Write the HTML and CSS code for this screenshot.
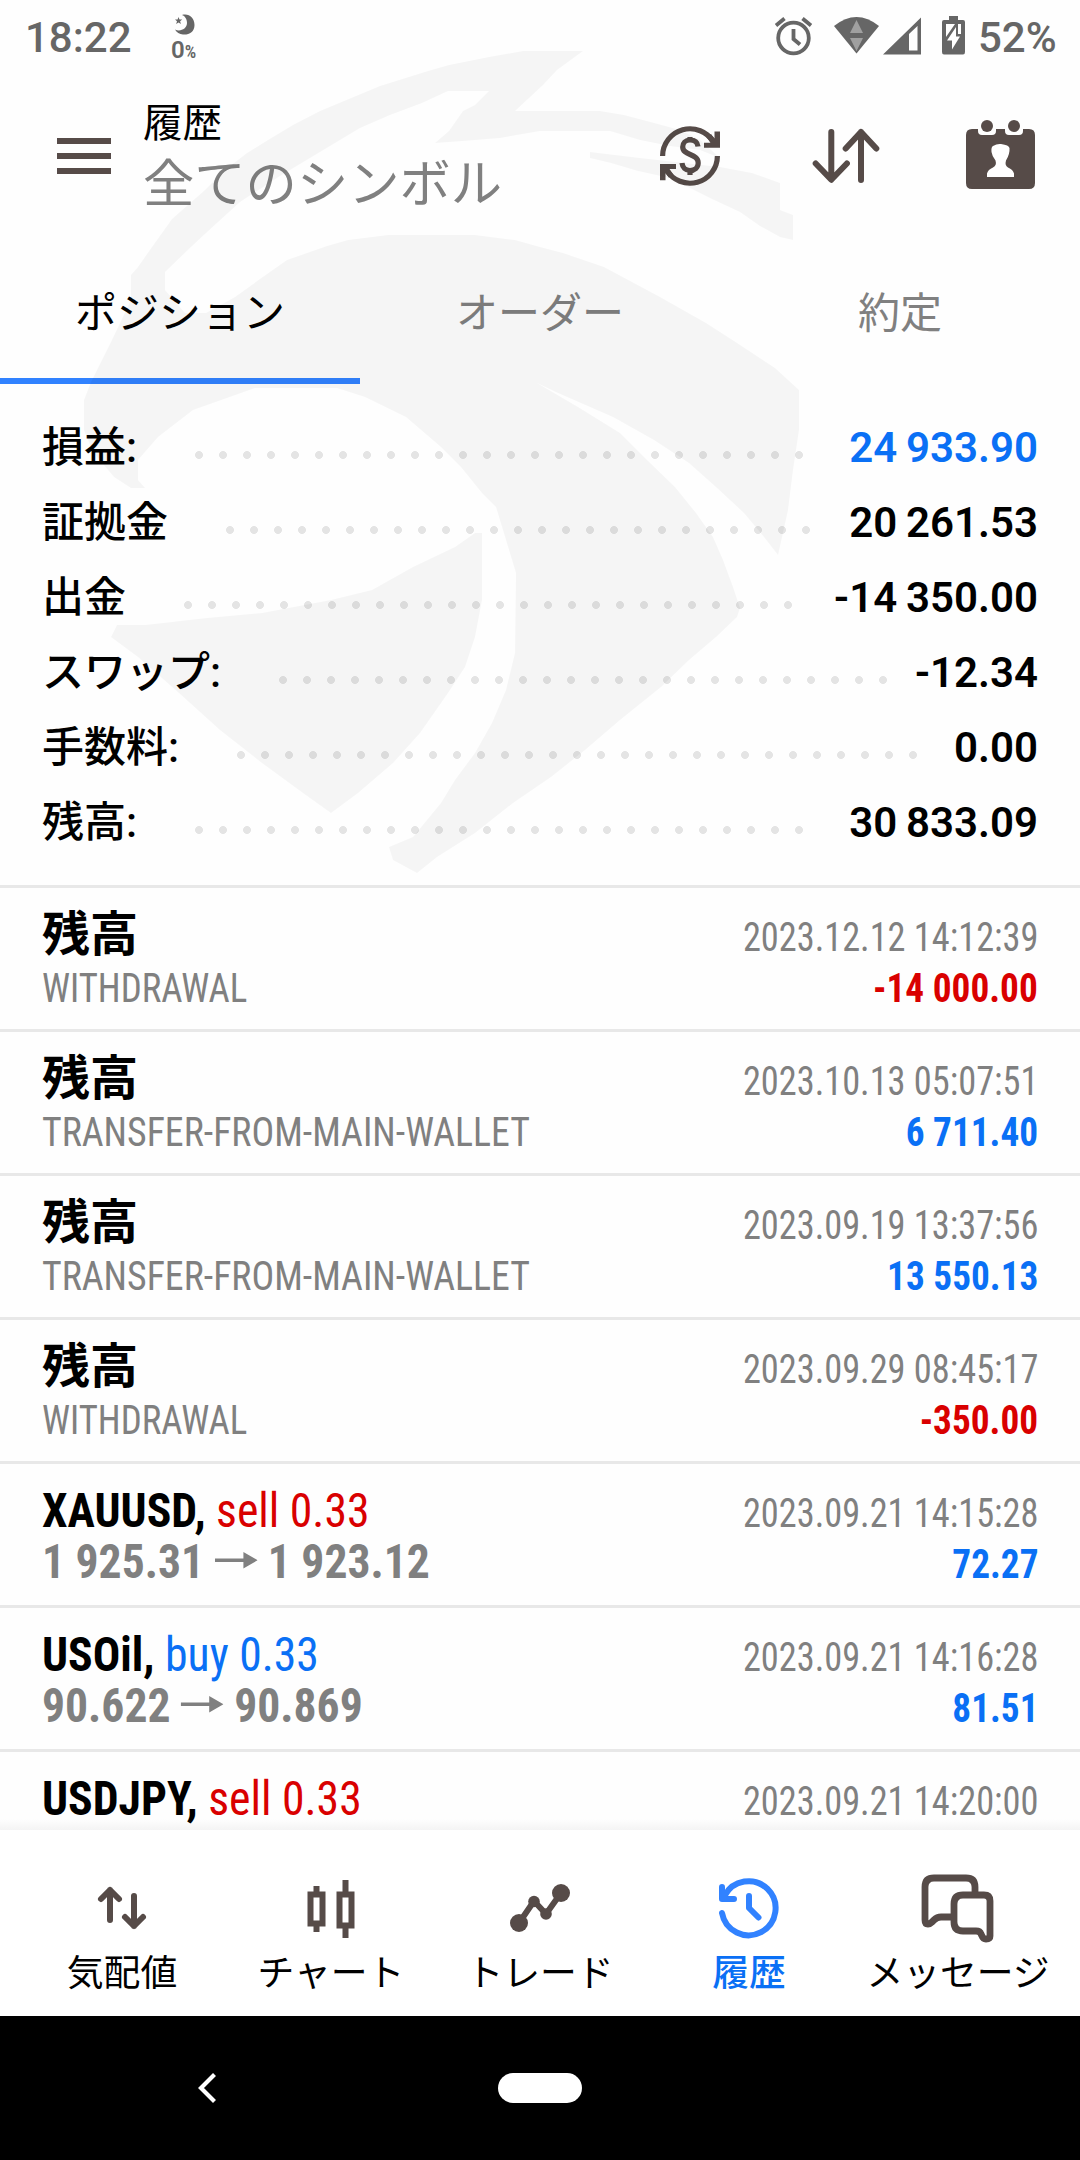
FILE: index.html
```html
<!DOCTYPE html>
<html lang="ja">
<head>
<meta charset="utf-8">
<title>履歴</title>
<link rel="stylesheet" href="styles.css">
</head>
<body>
<div class="screen">
  <div class="status">
    <span class="clock">18:22</span>
    <div class="moon">
      <svg width="24" height="22" viewBox="0 0 24 22"><path d="M10 1C17 -1 22.500 4 22.500 11S17 21 11 20.500C7.500 20 4.500 18.500 3 15.500C8 18 15 15 15 9C15 5 13 2 10 1Z" fill="#666"/><path d="M6.500 3l1 2.500 2.700.1-2.100 1.700.8 2.600-2.400-1.500L4.200 9.900 5 7.300 3 5.600l2.600-.1z" fill="#666"/></svg>
      <span class="moon-text">0<small>%</small></span>
    </div>
    <svg class="status-icons" width="200" height="60" viewBox="770 0 200 60">
      <g fill="none" stroke="#666" stroke-width="3.800"><circle cx="793.500" cy="38" r="15.300"/><path d="M793.500 29v10l6.500 5.500M776 25.500l8.500-7M811 25.500l-8.500-7"/></g>
      <path d="M834 26Q856.500 8 879 26L856.500 53.500Z" fill="#666"/>
      <path d="M856.500 20l6.500 13h-13zM850 38h13l-6.500 13z" fill="#a0a0a0"/>
      <path d="M883 54.500L921 17.500V54.500ZM909 50.500h8.500V26l-8.500 8z" fill="#666" fill-rule="evenodd"/>
      <path d="M949 20v-4h9v4h5q2 0 2 2v30q0 2.500-2 2.500h-19q-2 0-2-2.500V22q0-2 2-2z" fill="#666"/>
      <path d="M946 24h9l-9 13zM958 24h3v10h-3zM956 27v9.500h4l-8 13v-9h-5z" fill="#fff"/>
    </svg>
    <span class="percent">52%</span>
  </div>

  <header class="header">
    <div class="menu"><i></i><i></i><i></i></div>
    <div class="titles">
      <div class="title">履歴</div>
      <div class="subtitle">全てのシンボル</div>
    </div>
    <svg class="tools" width="390" height="80" viewBox="650 115 390 80">
      <g fill="none" stroke="#564b48" stroke-width="5.200">
        <path d="M662.600 156A27.400 27.200 0 0 1 713.500 142M717.400 156A27.400 27.200 0 0 1 666.500 170"/>
        <path d="M698 146.500C697.500 142 694.500 140 690 140C685.500 140 682.700 143 682.700 147C682.700 156 698.200 153 698.200 163C698.200 167.500 694.500 170.500 690 170.500C685.500 170.500 682.500 167.500 682 163M690 137v4M690 169v6"/>
      </g>
      <path d="M714.500 131.500h5.500v16.300h-16v-5h6.500l-4-5.800 4.500-3 3.500 4.500zM665.500 180.300h-5.500v-16.300h16v5h-6.500l4 5.800-4.500 3-3.500-4.500z" fill="#564b48"/>
      <g fill="none" stroke="#564b48" stroke-width="6" stroke-linecap="round" stroke-linejoin="round"><path d="M831.300 132v47M815.700 163.500l15.600 16.300 15.600-16.300M861 180V132M845.700 148.500L861 132l15.300 16.500"/></g>
      <path d="M972 129h6v2q0 4 4 4h10q4 0 4-4v-2h9v2q0 4 4 4h10q4 0 4-4v-2h6q6 0 6 6v48q0 6-6 6h-57q-6 0-6-6v-48q0-6 6-6z" fill="#564b48"/>
      <circle cx="987" cy="126" r="6" fill="#564b48"/><circle cx="1014" cy="126" r="6" fill="#564b48"/>
      <path d="M987 177V173.500Q988 169.500 993 167.500Q997 165.500 995.500 160.500Q992 156 991.500 152Q991 147 993 146Q997 143.500 1001 144Q1009 145 1009.500 148Q1010 154 1006 160.500Q1004.500 165.500 1008 167.500Q1013 169.500 1014 173.500V177Z" fill="#fff"/>
    </svg>
  </header>

  <nav class="tabs">
    <div class="tab active">ポジション</div>
    <div class="tab">オーダー</div>
    <div class="tab">約定</div>
  </nav>

  <section class="summary">
    <div class="sum"><span>損益:</span><i class="dots" style="width:624px"></i><b class="blue">24 933.90</b></div>
    <div class="sum"><span>証拠金</span><i class="dots" style="width:600px"></i><b>20 261.53</b></div>
    <div class="sum"><span>出金</span><i class="dots" style="width:624px"></i><b>-14 350.00</b></div>
    <div class="sum"><span>スワップ:</span><i class="dots" style="width:624px"></i><b>-12.34</b></div>
    <div class="sum"><span>手数料:</span><i class="dots" style="width:696px"></i><b>0.00</b></div>
    <div class="sum"><span>残高:</span><i class="dots" style="width:624px"></i><b>30 833.09</b></div>
  </section>

  <section class="list">
    <div class="row"><div class="line"><b class="name">残高</b><span class="date">2023.12.12 14:12:39</span></div><div class="line"><span class="note tight">WITHDRAWAL</span><b class="profit red">-14 000.00</b></div></div>
    <div class="row"><div class="line"><b class="name">残高</b><span class="date">2023.10.13 05:07:51</span></div><div class="line"><span class="note">TRANSFER-FROM-MAIN-WALLET</span><b class="profit blue">6 711.40</b></div></div>
    <div class="row"><div class="line"><b class="name">残高</b><span class="date">2023.09.19 13:37:56</span></div><div class="line"><span class="note">TRANSFER-FROM-MAIN-WALLET</span><b class="profit blue">13 550.13</b></div></div>
    <div class="row"><div class="line"><b class="name">残高</b><span class="date">2023.09.29 08:45:17</span></div><div class="line"><span class="note tight">WITHDRAWAL</span><b class="profit red">-350.00</b></div></div>
    <div class="row"><div class="line"><span class="name trade"><b>XAUUSD,</b> <span class="red">sell 0.33</span></span><span class="date">2023.09.21 14:15:28</span></div><div class="line"><b class="price">1 925.31 <svg class="arrow" width="45" height="34" viewBox="0 0 45 34"><path d="M0 14.500h30V8l15 8.200-15 8.300V18H0z" fill="#808080"/></svg> 1 923.12</b><b class="profit blue">72.27</b></div></div>
    <div class="row"><div class="line"><span class="name trade"><b>USOil,</b> <span class="blue">buy 0.33</span></span><span class="date">2023.09.21 14:16:28</span></div><div class="line"><b class="price">90.622 <svg class="arrow" width="45" height="34" viewBox="0 0 45 34"><path d="M0 14.500h30V8l15 8.200-15 8.300V18H0z" fill="#808080"/></svg> 90.869</b><b class="profit blue">81.51</b></div></div>
    <div class="row"><div class="line"><span class="name trade"><b>USDJPY,</b> <span class="red">sell 0.33</span></span><span class="date">2023.09.21 14:20:00</span></div></div>
  </section>

  <nav class="bottom">
    <div class="item"><svg width="80" height="80" viewBox="82 1870 80 80"><g fill="none" stroke="#564b48" stroke-width="6" stroke-linecap="round" stroke-linejoin="round"><path d="M110 1920v-30M101 1899l9-9 9 9M134 1896v30M125 1917l9 9 9-9"/></g></svg><span>気配値</span></div>
    <div class="item"><svg width="80" height="80" viewBox="291 1870 80 80"><g fill="none" stroke="#564b48" stroke-width="6"><path d="M310.500 1894.500h12v29h-12zM339.500 1894.500h12v31h-12zM316.500 1886v6M316.500 1926v6M345.500 1880v12M345.500 1928v10"/></g></svg><span>チャート</span></div>
    <div class="item"><svg width="80" height="80" viewBox="500 1870 80 80"><path d="M519 1923l15-22 12 13 15-21" fill="none" stroke="#564b48" stroke-width="6"/><g fill="#564b48"><circle cx="519" cy="1923" r="9"/><circle cx="534" cy="1901.500" r="5.800"/><circle cx="546" cy="1914" r="5.800"/><circle cx="561" cy="1893" r="9"/></g></svg><span>トレード</span></div>
    <div class="item on"><svg width="80" height="80" viewBox="709 1870 80 80"><g fill="none" stroke="#3182ff" stroke-width="6" stroke-linecap="round" stroke-linejoin="round"><path d="M722 1913A27 27 0 1 0 724.500 1896M722 1887v12h12M749 1896v12l9.500 9.500"/></g></svg><span>履歴</span></div>
    <div class="item"><svg width="80" height="80" viewBox="919 1870 80 80"><g fill="none" stroke="#564b48" stroke-width="6.800" stroke-linejoin="round"><path d="M976 1894v-7q0-9-9-9h-32q-9 0-9 9v33q0 4 3 4 2 0 4-2l2-2q3-3 7-3h13"/><path d="M964 1895h21q6 0 6 6v35q0 3-4 3-3 0-4-3l-1-2q-1-3-5-3h-13q-9 0-9-9v-18q0-9 9-9z"/></g></svg><span>メッセージ</span></div>
  </nav>

  <div class="system">
    <svg class="back" width="18" height="30" viewBox="0 0 18 30"><path d="M16.500 1.500L3 15l13.500 13.500" fill="none" stroke="#fff" stroke-width="4.200"/></svg>
    <i class="home"></i>
  </div>

  <svg class="watermark" width="1080" height="900" viewBox="0 0 1080 900"><g fill="#000" fill-opacity=".036">
    <path d="M583 51H523L489 57 449 65 428 71 380 86 320 111 293 125 268 140 247 153 225 170 205 190 172 219 152 247 138 267 131 275V300L111 342 98 368 91 382 84 400V430L93 452 114 477 131 488H145L138 480V460L158 437 193 410 241 393 255 388H337L365 397 406 417 441 447 461 467 482 493 496 507 503 530 516 573 515 653 506 690 492 723 475 753 455 780 441 803 413 837 389 847 393 860 417 873 437 857 475 833 513 803 551 777 585 750 620 720 661 687 689 660 716 637 737 617 740 608 733 587 723 560 713 537 696 513 675 487 647 460 620 433 578 407 537 383 558 393 613 417 654 440 689 463 716 487 744 513 764 537 778 555 788 510 793 470 799 430V390L775 368 734 341 706 323 660 297 604 267 563 253 540 247 515 240 475 235H388L348 240 327 246 287 260 267 274 235 297 206 313H185L165 290V272L192 246 206 233 240 202 280 176 320 152 360 128 390 115 422 103 448 91H489L475 105 463 111 449 131 435 143 463 141 500 138 540 131H610L640 140 670 146 700 150 720 158 700 140 680 130 658 124 624 115 600 111H515L543 85 557 70Z"/>
    <path d="M590 152L640 158 720 167 752 173 780 183V210L793 215V240L780 237 760 226 740 212 712 199 670 178 638 171 611 163 590 158Z"/>
    <path d="M475 533L455 547 413 567 372 590 331 600 262 613 207 618 145 625H117L111 637 138 657 179 693 220 730 262 763 303 793 331 813 358 793 393 763 420 733 448 693 465 667 475 637 482 600V533Z"/>
  </g></svg>
</div>
</body>
</html>
```
FILE: styles.css
```css
* { box-sizing: border-box; }
body { margin: 0; background: #fefefe; font-family: Roboto, "Noto Sans CJK JP", sans-serif; color: #000; }
i { display: block; font-style: normal; }
svg { display: block; flex: none; }
.screen { position: relative; width: 1080px; height: 2160px; overflow: hidden; display: flex; flex-direction: column; background: #fefefe; }
.status { height: 75px; display: flex; align-items: flex-start; color: #666; font-size: 42px; line-height: 75px; }
.clock { width: 145px; margin-left: 25px; font-weight: 480; }
.moon { width: 60px; padding-top: 14px; display: flex; flex-direction: column; }
.moon svg { margin-left: 2px; }
.moon-text { margin: 2px 0 0 1px; font-size: 24px; line-height: 24px; font-weight: 600; }
.moon-text small { font-size: 18px; font-stretch: 85%; }
.status-icons { margin-left: auto; }
.percent { width: 102px; margin-left: 8px; font-weight: 480; }
.header { height: 165px; display: flex; align-items: flex-start; }
.menu { margin: 63px 33px 0 57px; display: flex; flex-direction: column; gap: 9px; }
.menu i { width: 54px; height: 6px; background: #564b48; }
.title { margin: 22px 0 0 -1px; font-size: 39.500px; line-height: 54px; }
.subtitle { margin: 1px 0 0 -1px; font-size: 51.300px; line-height: 66px; color: #808080; }
.tools { margin: 40px 40px 0 auto; }
.tabs { height: 144px; display: flex; }
.tab { flex: 1; padding-top: 5px; text-align: center; font-size: 42px; line-height: 138px; color: #808080; border-bottom: 6px solid transparent; }
.tab.active { color: #000; border-color: #3182ff; }
.summary { height: 501px; padding: 26px 42px 0 42px; }
.sum { height: 75px; display: flex; align-items: flex-start; font-size: 42px; font-weight: 500; line-height: 75px; white-space: nowrap; }
.sum b { margin-left: auto; font-weight: 600; word-spacing: -1.500px; }
.dots { height: 8px; margin: 41px 0 0 50px; background: radial-gradient(circle at 12px 4px, rgba(0,0,0,.1) 3.600px, transparent 4.300px) 0 0 / 24px 8px repeat-x; }
.blue { color: #0a70f5; }
.red { color: #d90000; }
.list { height: 945px; overflow: hidden; font-stretch: 75%; font-family: "Roboto Condensed", Roboto, "Noto Sans CJK JP", sans-serif; white-space: nowrap; background: linear-gradient(transparent 934px, #f4f4f4); }
.row { height: 144px; border-top: 3px solid #e8e8e8; padding: 21px 42px 0 42px; }
.line { height: 51px; line-height: 51px; display: flex; align-items: baseline; }
.line::before { content: "\200b"; width: 0; font-size: 48px; }
.line > :last-child { margin-left: auto; }
.name, .price { font-size: 48px; }
.trade, .price, .note { transform-origin: left; }
.date, .profit { transform-origin: right; }
.trade { transform: scaleX(.952); }
.price { color: #808080; transform: scaleX(.95); }
.arrow { display: inline-block; vertical-align: 0; }
.date, .note, .profit { font-size: 40px; }
.date { transform: scaleX(.908); }
.note { transform: scaleX(.946); }
.note.tight { transform: scaleX(.92); }
.profit { transform: scaleX(.932); }
.date, .note { color: #808080; }
.bottom { height: 186px; padding: 0 17.500px; display: flex; background: #fff; font-size: 36.800px; }
.item { flex: 1 0 0; width: 0; padding-top: 40px; display: flex; flex-direction: column; align-items: center; white-space: nowrap; }
.item span { line-height: 48px; }
.on { color: #0a70f5; font-weight: 500; }
.system { height: 144px; display: flex; align-items: center; background: #000; }
.back { margin-left: 198px; }
.home { width: 84px; height: 30px; margin-left: 282px; border-radius: 15px; background: #fff; }
.watermark { position: absolute; left: 0; top: 0; pointer-events: none; }
```
